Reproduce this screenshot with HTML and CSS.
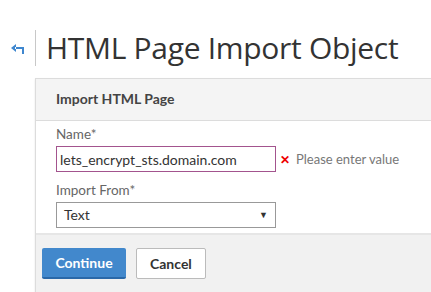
FILE: index.html
```html
<!DOCTYPE html>
<html>
<head>
    <title>HTML Page Import Object</title>
    <link rel="stylesheet" href="styles.css">
</head>
<body>
    <div class="page-head">
        <a class="back" href="#">
            <svg width="14" height="10" viewBox="0 0 14 10"><path d="M5 0 L0 4 L5 8 Z M4 3 H13 V10 H11 V5 H4 Z" fill="#3f87cf"/></svg>
        </a>
        <h1>HTML Page Import Object</h1>
    </div>

    <div class="card">
        <div class="card-head">Import HTML Page</div>
        <div class="card-body">
            <div class="field">
                <label>Name*</label>
                <div class="row">
                    <input type="text" class="invalid" value="lets_encrypt_sts.domain.com">
                    <span class="error"><span class="x">&#x2715;</span>Please enter value</span>
                </div>
            </div>
            <div class="field">
                <label>Import From*</label>
                <div class="select">Text<span class="caret">&#9660;</span></div>
            </div>
        </div>
        <div class="card-foot">
            <button class="btn primary">Continue</button>
            <button class="btn">Cancel</button>
        </div>
    </div>
</body>
</html>
```

FILE: styles.css
```css
body { margin: 0; background: #fff; font-family: "Open Sans", sans-serif; color: #333; }
.page-head { display: flex; align-items: center; height: 36px; margin-top: 30px; }
.back { width: 35px; display: flex; justify-content: center; }
.back svg { display: block; margin-top: 2px; }
h1 { margin: 0; height: 36px; border-left: 1px solid #c8c8c8; padding-left: 10px; font-weight: 400; font-size: 30px; line-height: 36px; color: #333; letter-spacing: -0.3px; }
.card { margin: 12px -10px 0 35px; border: 1px solid #dcdcdc; box-shadow: 0 1px 2px rgba(0,0,0,0.1); font-family: Lato, sans-serif; }
.card-head { background: #f4f4f4; height: 41px; line-height: 39px; padding-left: 20px; font-size: 14px; font-weight: 700; color: #444; border-bottom: 1px solid #dcdcdc; }
.card-body { background: #fff; padding: 4px 20px 5px; border-bottom: 2px solid #e6e6e6; }
.field label { display: block; font-size: 13.5px; color: #666; line-height: 18px; margin-bottom: 3px; }
.field + .field { margin-top: 9px; }
.row { display: flex; align-items: center; }
input { width: 220px; height: 26px; box-sizing: border-box; border: 1px solid #a3548e; padding: 0 3px; font-family: Lato, sans-serif; font-size: 14px; color: #333; margin: 0; text-decoration: underline wavy #e03030; text-decoration-skip-ink: none; text-underline-offset: 3px; }
.error { margin-left: 4px; font-size: 13px; color: #777; }
.x { color: #e00; font-size: 12px; font-weight: 700; margin-right: 6px; }
.select { width: 220px; height: 26px; box-sizing: border-box; border: 1px solid #999; padding: 0 7px; font-size: 14px; line-height: 24px; color: #333; display: flex; justify-content: space-between; }
.caret { font-size: 9px; color: #333; }
.card-foot { background: #f1f1f1; height: 57px; display: flex; align-items: center; gap: 10px; padding-left: 6px; }
.btn { height: 31px; padding: 0 13px; font-family: Lato, sans-serif; font-size: 14px; font-weight: 700; border: 1px solid #bbb; border-radius: 2px; background: #fff; color: #333; }
.btn.primary { width: 84px; background: #4288cc; color: #fff; border: none; border-bottom: 2px solid #2a68a8; }
```
